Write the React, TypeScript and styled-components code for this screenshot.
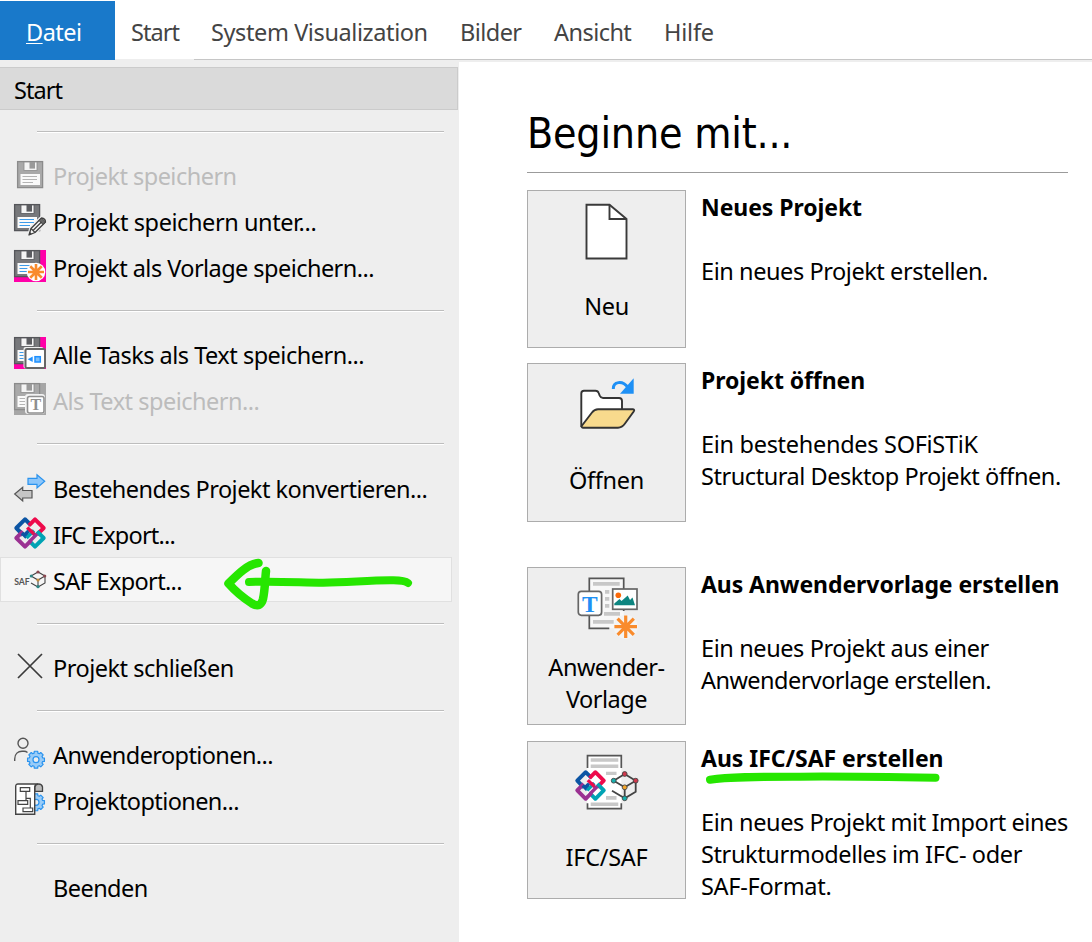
import React from 'react';
import styled, { createGlobalStyle, css } from 'styled-components';

const GlobalStyle = createGlobalStyle`
  *, *::before, *::after { box-sizing: border-box; }
  body { margin: 0; background: #fff; overflow: hidden; }
`;

const Page = styled.div`
  position: relative;
  display: flex;
  flex-direction: column;
  width: 1092px;
  height: 942px;
  overflow: hidden;
  background: #fff;
  color: #000;
  font: 23.5px/32px 'Noto Sans', 'Open Sans', sans-serif;
  white-space: nowrap;
`;

const TabBar = styled.nav`
  display: flex;
  flex: none;
  height: 62px;
  padding-top: 1px;
  border-bottom: 2px solid #eee;
`;

const Tab = styled.div<{ $active?: boolean; $joined?: boolean; $width: number; $spacing?: number; $inset?: number }>`
  width: ${(p) => p.$width}px;
  height: 59px;
  padding: 15px 0 0 ${(p) => p.$inset ?? 16}px;
  color: #444;
  letter-spacing: ${(p) => p.$spacing ?? -0.5}px;
  border-bottom: 1px solid ${(p) => (p.$joined ? '#eee' : '#c6c6c6')};
  ${(p) =>
    p.$active &&
    css`
      color: #fff;
      background: #1979ca;
      border-bottom: 0;
    `}
`;

const AccessKey = styled.span`
  text-decoration: underline;
  text-decoration-thickness: 1px;
  text-underline-offset: 2px;
`;

const Body = styled.div`
  display: flex;
  flex: 1;
`;

const Sidebar = styled.aside`
  flex: none;
  width: 459px;
  padding-top: 5px;
  background: #eee;
`;

const StartItem = styled.div`
  width: 458px;
  height: 43px;
  margin-bottom: 21px;
  padding: 6px 0 0 14px;
  background: #dadada;
  border: 1px solid #cbcbcb;
  border-left: 0;
  letter-spacing: -0.95px;
`;

const Separator = styled.hr<{ $after?: number }>`
  width: 407px;
  height: 2px;
  margin: 0 0 ${(p) => p.$after ?? 19}px 37px;
  border: 0;
  border-top: 1px solid #bdbdbd;
  background: #fff;
`;

const MenuGroup = styled.div`
  padding-bottom: 20px;
`;

const MenuRow = styled.div<{ $disabled?: boolean; $hover?: boolean; $spacing?: number }>`
  display: flex;
  gap: 7px;
  width: 452px;
  height: ${(p) => (p.$hover ? 45 : 46)}px;
  margin-bottom: ${(p) => (p.$hover ? 1 : 0)}px;
  padding: ${(p) => (p.$hover ? '5px 0 0 13px' : '6px 0 0 14px')};
  border: ${(p) => (p.$hover ? '1px solid #e0e0e0' : '0')};
  background: ${(p) => (p.$hover ? '#f6f6f6' : 'transparent')};
  color: ${(p) => (p.$disabled ? '#bcbcbc' : '#000')};
  letter-spacing: ${(p) => p.$spacing ?? -0.5}px;
`;

const IconSlot = styled.span`
  flex: none;
  width: 32px;
  height: 32px;
  svg { display: block; overflow: visible; }
`;

const RowLabel = styled.span`
  padding-top: 2px;
`;

const Main = styled.main`
  flex: 1;
  min-width: 0;
  padding: 45px 24px 0 68px;
`;

const Heading = styled.h1`
  height: 66px;
  margin: 0 0 17px;
  border-bottom: 1px solid #9b9b9b;
  font: 400 42.5px/54px 'DejaVu Sans Condensed', 'DejaVu Sans', sans-serif;
  font-stretch: condensed;
  letter-spacing: -0.2px;
`;

const Choice = styled.section<{ $after: number }>`
  display: flex;
  gap: 15px;
  margin-bottom: ${(p) => p.$after}px;
`;

const Tile = styled.div<{ $height?: number }>`
  display: flex;
  flex: none;
  flex-direction: column;
  align-items: center;
  width: 159px;
  height: ${(p) => p.$height ?? 158}px;
  padding-top: 9px;
  border: 1px solid #acacac;
  background: #eee;
  svg { display: block; flex: none; overflow: visible; }
`;

const TileLabel = styled.div<{ $top: number; $spacing?: number }>`
  padding-top: ${(p) => p.$top}px;
  text-align: center;
  white-space: pre-line;
  letter-spacing: ${(p) => p.$spacing ?? -0.3}px;
`;

const ChoiceText = styled.div`
  height: 0;
  padding-top: 1px;
`;

const ChoiceTitle = styled.h2<{ $spacing?: number }>`
  margin: 0 0 32px;
  font-size: 23px;
  font-weight: 700;
  line-height: 32px;
  letter-spacing: ${(p) => p.$spacing ?? -0.07}px;
`;

const Line = styled.div<{ $spacing?: number }>`
  letter-spacing: ${(p) => p.$spacing ?? -0.43}px;
`;

const Marker = styled.svg`
  position: absolute;
  inset: 0;
  pointer-events: none;
`;

const Icon = ({ children }: { children: React.ReactNode }) => (
  <IconSlot>
    <svg width="32" height="32" viewBox="0 0 32 32" fill="none">{children}</svg>
  </IconSlot>
);

const TileIcon = ({ children }: { children: React.ReactNode }) => (
  <svg width="65" height="64" viewBox="0 0 65 64" fill="none">{children}</svg>
);

const Floppy = ({ muted = false }: { muted?: boolean }) => {
  const body = muted ? '#a9a9a9' : '#77787b';
  const edge = muted ? '#8b8b8b' : '#55565a';
  const ink = muted ? '#b4b4b4' : '#3c9bea';
  return (
    <g>
      <rect x="0.6" y="0.6" width="25" height="26" fill={body} stroke={edge} strokeWidth="1.3" />
      <rect x="7" y="1" width="13" height="8.5" fill="#f4f4f4" stroke={edge} strokeWidth="0.8" />
      <rect x="12.5" y="1" width="5.5" height="6.6" fill={muted ? '#9a9a9a' : '#5b5c60'} />
      <rect x="3.5" y="13" width="19.5" height="11" fill="#fafafa" />
      <path d="M5.5 15.5H20M5.5 18.5H20M5.5 21.5H16" stroke={ink} strokeWidth="1.2" />
    </g>
  );
};

const Star = ({ x, y, r, w }: { x: number; y: number; r: number; w: number }) => {
  const d = r * 0.72;
  return (
    <path
      d={`M${x - r} ${y}H${x + r}M${x} ${y - r}V${y + r}M${x - d} ${y - d}L${x + d} ${y + d}M${x + d} ${y - d}L${x - d} ${y + d}`}
      stroke="#f98b2c"
      strokeWidth={w}
    />
  );
};

const IfcLogo = () => (
  <g strokeWidth="4" strokeLinejoin="round">
    <path d="M9 18 2.300 11 11 2.300 17 8.200" stroke="#0c55a4" />
    <path d="M15 8.300 21 2.300 29.700 11 23 17.700" stroke="#ee0a4b" />
    <path d="M23 14.300 29.700 21 21 29.700 15 23.700" stroke="#00a3b4" />
    <path d="M9 14.300 2.300 21 11 29.700 17 23.700" stroke="#9b3192" />
    <g strokeWidth="3.4">
      <path d="M12.500 20.500 8 16M10 19 13.500 15.500" stroke="#0c55a4" />
      <path d="M13.200 10.500 21 18.200" stroke="#ee0a4b" />
      <path d="M12.500 21 20 13.500" stroke="#00a3b4" />
      <path d="M15.500 24.500 23 17" stroke="#9b3192" />
      <path d="M11 17.500 14.500 14" stroke="#0c55a4" />
      <path d="M16.500 13.500 19.500 16.500" stroke="#ee0a4b" />
    </g>
  </g>
);

const gearPath = (cx: number, cy: number, r: number) => {
  const pts: string[] = [];
  for (let i = 0; i < 8; i += 1) {
    [[-0.28, 0.8], [-0.2, 1], [0.2, 1], [0.28, 0.8]].forEach(([o, k]) => {
      const a = (i * Math.PI) / 4 + o;
      pts.push(`${(cx + Math.cos(a) * r * k).toFixed(2)} ${(cy + Math.sin(a) * r * k).toFixed(2)}`);
    });
  }
  return `M${pts.join('L')}Z`;
};

const Gear = ({ x, y }: { x: number; y: number }) => (
  <g stroke="#2a93ee" strokeWidth="1.2">
    <path d={gearPath(x, y, 8.6)} fill="#99ccf8" strokeLinejoin="round" />
    <circle cx={x} cy={y} r="3" fill="#eee" />
  </g>
);

const Cube = () => (
  <g>
    <path
      d="M50.700 23 39.700 29.700 50.700 36.300 61.700 29.700ZM50.700 36.300V47.300L61.700 40.700V29.700M38 39.700 50.700 47.300"
      stroke="#444"
      strokeWidth="1.8"
    />
    <g stroke="#444" strokeWidth="0.9">
      <circle cx="50.700" cy="23" r="2.400" fill="#d0384c" />
      <circle cx="39.700" cy="29.700" r="2.400" fill="#16b0ae" />
      <circle cx="61.700" cy="29.700" r="2.400" fill="#d0384c" />
      <circle cx="50.700" cy="36.300" r="2.400" fill="#f5a62a" />
      <circle cx="50.700" cy="47.300" r="2.400" fill="#16b0ae" />
    </g>
  </g>
);

const SaveIcon = () => (
  <Icon><g transform="translate(3 3)"><Floppy muted /></g></Icon>
);

const SaveAsIcon = () => (
  <Icon>
    <Floppy />
    <path d="M14.500 31.500 16.500 24 26.500 14 32 18.500 21.500 29Z" fill="#eee" stroke="#eee" strokeWidth="2.5" />
    <path d="M15 31 17 24.500 27.500 14Q31.500 14.500 31.500 18L21 28.500Z" fill="#f4f4f4" stroke="#3f3f3f" strokeWidth="1.3" strokeLinejoin="round" />
    <path d="M25 16.500 29 20.500 31.500 18 27.500 14Z" fill="#666" stroke="#3f3f3f" />
    <path d="M19 26.500 27.500 18M17 24.500 21 28.500" stroke="#3f3f3f" strokeWidth="1.2" />
    <path d="M15 31 16 28 18 30Z" fill="#3f3f3f" />
  </Icon>
);

const SaveTemplateIcon = () => (
  <Icon>
    <rect width="32" height="32" fill="#ff00a8" />
    <Floppy />
    <circle cx="22" cy="22" r="9.3" fill="#fff" />
    <Star x={22} y={22} r={8} w={2.6} />
  </Icon>
);

const SaveTasksIcon = () => (
  <Icon>
    <rect width="32" height="32" fill="#ff00a8" />
    <Floppy />
    <rect x="9.5" y="10" width="20" height="21.5" rx="2" fill="#eee" />
    <rect x="11.500" y="12" width="19.5" height="19" rx="1.5" fill="#fff" stroke="#666" strokeWidth="2" />
    <path d="M13.700 22.300 18.700 19.500V25Z" fill="#1e90ff" />
    <rect x="21" y="19.700" width="5.300" height="5.300" fill="#7cc0fb" stroke="#1e90ff" strokeWidth="1.5" />
  </Icon>
);

const SaveTextIcon = () => (
  <Icon>
    <rect width="32" height="32" fill="#a6a6a6" />
    <Floppy muted />
    <rect x="11" y="11" width="20" height="20" rx="3" fill="#f2f2f2" />
    <rect x="13.500" y="13.500" width="16.500" height="16.500" rx="2" fill="#fff" stroke="#909090" strokeWidth="1.6" />
    <text x="21.800" y="27" textAnchor="middle" fontFamily="Liberation Serif, serif" fontWeight="700" fontSize="16" letterSpacing="0" fill="#8e8e8e">T</text>
  </Icon>
);

const ConvertIcon = () => (
  <Icon>
    <path d="M14 7.300H23V3.700L30.700 10.300 23 17V13.300H14Z" fill="#8cc6fa" stroke="#2a93ee" strokeWidth="1.2" />
    <path d="M.7 23 8.700 16.300V19.500H18V27H8.700V30Z" fill="#c6c6c6" stroke="#555" strokeWidth="1.2" />
  </Icon>
);

const SafIcon = () => (
  <Icon>
    <text x="0.2" y="22" fontFamily="Lato, sans-serif" fontWeight="700" fontSize="8.7" letterSpacing="0" fill="#555">SAF</text>
    <path d="M24 9 17 13 24 17 31 13ZM24 17V24L31 20V13M17 20 24 24" stroke="#444" strokeWidth="1.1" />
    <circle cx="24" cy="9" r="1.6" fill="#8a4850" />
    <circle cx="17.300" cy="13" r="1.6" fill="#2e8584" />
    <circle cx="30.700" cy="13" r="1.6" fill="#8a4850" />
    <circle cx="24" cy="17" r="1.6" fill="#c28a3a" />
    <circle cx="24" cy="23.700" r="1.6" fill="#2e8584" />
  </Icon>
);

const CloseIcon = () => (
  <Icon><path d="M4 4 28 28M28 4 4 28" stroke="#3a3a3a" strokeWidth="1.7" /></Icon>
);

const UserOptionsIcon = () => (
  <Icon>
    <circle cx="9" cy="6.300" r="5" stroke="#555" strokeWidth="1.4" />
    <path d="M.7 24V22C.7 17 4 14.300 8 14.300H10Q12 14.300 13.500 15.500" stroke="#555" strokeWidth="1.4" />
    <Gear x={22} y={22.7} />
  </Icon>
);

const ProjectOptionsIcon = () => (
  <Icon>
    <Gear x={22} y={19.3} />
    <path d="M20.700 8.500V31.300H1.700V3.500Q1.700 1 4 1H24Q21 1.500 20.700 4Z" fill="#fff" stroke="#444" strokeWidth="1.4" />
    <path d="M21 8.300V4Q21.500 1 24.700 1T28.500 4V8.300Z" fill="#bbb" stroke="#444" strokeWidth="1.3" />
    <path d="M12 8.500V17.500M12 15.300H16.300V25" stroke="#444" strokeWidth="1.2" />
    <path d="M6.300 4.700H15.700V8.300H6.300ZM4 17.700H13.700V21.300H4ZM9 25H18.700V28.700H9Z" fill="#fff" stroke="#444" strokeWidth="1.2" />
  </Icon>
);

const NewIcon = () => (
  <TileIcon>
    <path d="M12.500 4.700H35.500L52.500 19V58.500H12.500Z" fill="#fff" stroke="#3a3a3a" strokeWidth="1.9" />
    <path d="M35.500 4.700V19H52.500" stroke="#3a3a3a" strokeWidth="1.9" />
  </TileIcon>
);

const OpenIcon = () => (
  <TileIcon>
    <path d="M7.300 53V20.500Q7.300 17.700 10 17.700H21.500Q24 17.700 24.700 20L25.700 22.700Q26.700 25 29 25H45Q48 25 48 28V37L40 52Z" fill="#fff" stroke="#333" strokeWidth="1.9" />
    <path d="M8 52.500 18 39.500Q20.500 36.300 24 36.300H59Q61 36.500 59.700 38.500L51 50.500Q48 54.700 44 54.700H9Q7 54.500 8 52.500Z" fill="#f8da8d" stroke="#333" strokeWidth="1.9" />
    <path d="M39.300 16C39 8.500 48.500 7 54 14.500" stroke="#1e90f5" strokeWidth="3" />
    <path d="M59.700 5.300V20.700H46Z" fill="#1e90f5" />
  </TileIcon>
);

const TemplateIcon = () => (
  <TileIcon>
    <path d="M15.300 1.300H49.700V51.300H15.300Z" fill="#f8f8f8" />
    <path d="M35.300 51.300H15.300V1.300H49.700V34" stroke="#555" strokeWidth="1.7" />
    <path d="M19 5H45.700V8.700H19ZM31 13H35.300V16.700H31ZM31 20H35.300V23.700H31ZM31 27H35.300V30.700H31ZM30 35H46V38.700H30ZM19 43H39.700V46.700H19Z" fill="#c8c8c8" />
    <rect x="4.300" y="14.300" width="23.300" height="24" rx="3" fill="#fff" stroke="#666" strokeWidth="1.7" />
    <text x="15.900" y="34.700" textAnchor="middle" fontFamily="Liberation Serif, serif" fontWeight="700" fontSize="23.5" letterSpacing="0" fill="#1e90f5">T</text>
    <rect x="38.700" y="12" width="24.300" height="20.300" fill="#fff" stroke="#666" strokeWidth="1.7" />
    <circle cx="44.300" cy="18.300" r="2.800" fill="#fb6a0a" />
    <path d="M40.300 28.300V26.500L45.500 22 47.500 24 53.700 18.500 56 23 58.500 20.500 61 28.300Z" fill="#0d8580" />
    <circle cx="51.700" cy="49.700" r="12" fill="#f4f4f4" />
    <Star x={51.7} y={49.7} r={11.3} w={3.2} />
  </TileIcon>
);

const ImportIcon = () => (
  <TileIcon>
    <path d="M13.300 4.700H47.300V57.700H13.300Z" fill="#fff" />
    <path d="M13.500 17V4.700H47.300V17M13.500 52.300V57.700H47.300V52.300" stroke="#555" strokeWidth="1.7" />
    <path d="M16.700 7.300H44.300V10.700H16.700ZM16.700 13.500H44.300V17H16.700ZM32 20.700H42.500V24H32ZM32 45H42.500V48.700H32ZM16.700 51.500H44.300V55H16.700Z" fill="#c8c8c8" />
    <g transform="translate(1 19) scale(.97)"><IfcLogo /></g>
    <Cube />
  </TileIcon>
);

export default function App() {
  return (
    <Page>
      <GlobalStyle />
      <TabBar>
        <Tab $active $width={115} $inset={26}><AccessKey>D</AccessKey>atei</Tab>
        <Tab $joined $width={79} $spacing={-0.95}>Start</Tab>
        <Tab $width={250} $spacing={-0.4} $inset={17}>System Visualization</Tab>
        <Tab $width={94} $spacing={-0.55}>Bilder</Tab>
        <Tab $width={110} $spacing={-0.55}>Ansicht</Tab>
        <Tab $width={444} $spacing={-0.2}>Hilfe</Tab>
      </TabBar>
      <Body>
        <Sidebar>
          <StartItem>Start</StartItem>
          <Separator />
          <MenuGroup>
            <MenuRow $disabled $spacing={-0.52}><SaveIcon /><RowLabel>Projekt speichern</RowLabel></MenuRow>
            <MenuRow $spacing={-0.42}><SaveAsIcon /><RowLabel>Projekt speichern unter...</RowLabel></MenuRow>
            <MenuRow $spacing={-0.55}><SaveTemplateIcon /><RowLabel>Projekt als Vorlage speichern...</RowLabel></MenuRow>
          </MenuGroup>
          <Separator />
          <MenuGroup>
            <MenuRow><SaveTasksIcon /><RowLabel>Alle Tasks als Text speichern...</RowLabel></MenuRow>
            <MenuRow $disabled><SaveTextIcon /><RowLabel>Als Text speichern...</RowLabel></MenuRow>
          </MenuGroup>
          <Separator $after={20} />
          <MenuGroup>
            <MenuRow $spacing={-0.53}><ConvertIcon /><RowLabel>Bestehendes Projekt konvertieren...</RowLabel></MenuRow>
            <MenuRow $spacing={-0.8}><Icon><IfcLogo /></Icon><RowLabel>IFC Export...</RowLabel></MenuRow>
            <MenuRow $hover $spacing={-0.66}><SafIcon /><RowLabel>SAF Export...</RowLabel></MenuRow>
          </MenuGroup>
          <Separator />
          <MenuGroup>
            <MenuRow><CloseIcon /><RowLabel>Projekt schließen</RowLabel></MenuRow>
          </MenuGroup>
          <Separator />
          <MenuGroup>
            <MenuRow $spacing={-0.6}><UserOptionsIcon /><RowLabel>Anwenderoptionen...</RowLabel></MenuRow>
            <MenuRow $spacing={-0.6}><ProjectOptionsIcon /><RowLabel>Projektoptionen...</RowLabel></MenuRow>
          </MenuGroup>
          <Separator />
          <MenuRow $spacing={-0.55}><IconSlot /><RowLabel>Beenden</RowLabel></MenuRow>
        </Sidebar>
        <Main>
          <Heading>Beginne mit...</Heading>
          <Choice $after={15}>
            <Tile><NewIcon /><TileLabel $top={26}>Neu</TileLabel></Tile>
            <ChoiceText>
              <ChoiceTitle>Neues Projekt</ChoiceTitle>
              <Line>Ein neues Projekt erstellen.</Line>
            </ChoiceText>
          </Choice>
          <Choice $after={45}>
            <Tile $height={159}><OpenIcon /><TileLabel $top={27}>Öffnen</TileLabel></Tile>
            <ChoiceText>
              <ChoiceTitle>Projekt öffnen</ChoiceTitle>
              <Line $spacing={-0.3}>Ein bestehendes SOFiSTiK</Line>
              <Line $spacing={-0.45}>Structural Desktop Projekt öffnen.</Line>
            </ChoiceText>
          </Choice>
          <Choice $after={16}>
            <Tile><TemplateIcon /><TileLabel $top={10} $spacing={-0.5}>{'Anwender-\nVorlage'}</TileLabel></Tile>
            <ChoiceText>
              <ChoiceTitle>Aus Anwendervorlage erstellen</ChoiceTitle>
              <Line $spacing={-0.4}>Ein neues Projekt aus einer</Line>
              <Line $spacing={-0.55}>Anwendervorlage erstellen.</Line>
            </ChoiceText>
          </Choice>
          <Choice $after={0}>
            <Tile><ImportIcon /><TileLabel $top={26}>IFC/SAF</TileLabel></Tile>
            <ChoiceText>
              <ChoiceTitle $spacing={-0.03}>Aus IFC/SAF erstellen</ChoiceTitle>
              <Line $spacing={-0.41}>Ein neues Projekt mit Import eines</Line>
              <Line $spacing={-0.38}>Strukturmodelles im IFC- oder</Line>
              <Line $spacing={-0.3}>SAF-Format.</Line>
            </ChoiceText>
          </Choice>
        </Main>
      </Body>
      <Marker width="1092" height="942" viewBox="0 0 1092 942" fill="none" stroke="#26e600" strokeLinecap="round" strokeLinejoin="round" strokeWidth="8">
        <path strokeWidth="8.5" d="M258.500 563C248 564 238 574 228.500 583.500C236 592 245 599 252 603.500C258 607 261.500 605 263 599C265 590 265 580 266 571" />
        <path d="M249 582C275 581 300 582.500 323 582.700C350 582 370 580.500 390 580.300C400 580 405 580.500 408 583" />
        <path d="M710 779.700C730 776.500 760 776.700 800 776.700C850 776.300 890 777 935.500 777.800" />
      </Marker>
    </Page>
  );
}
